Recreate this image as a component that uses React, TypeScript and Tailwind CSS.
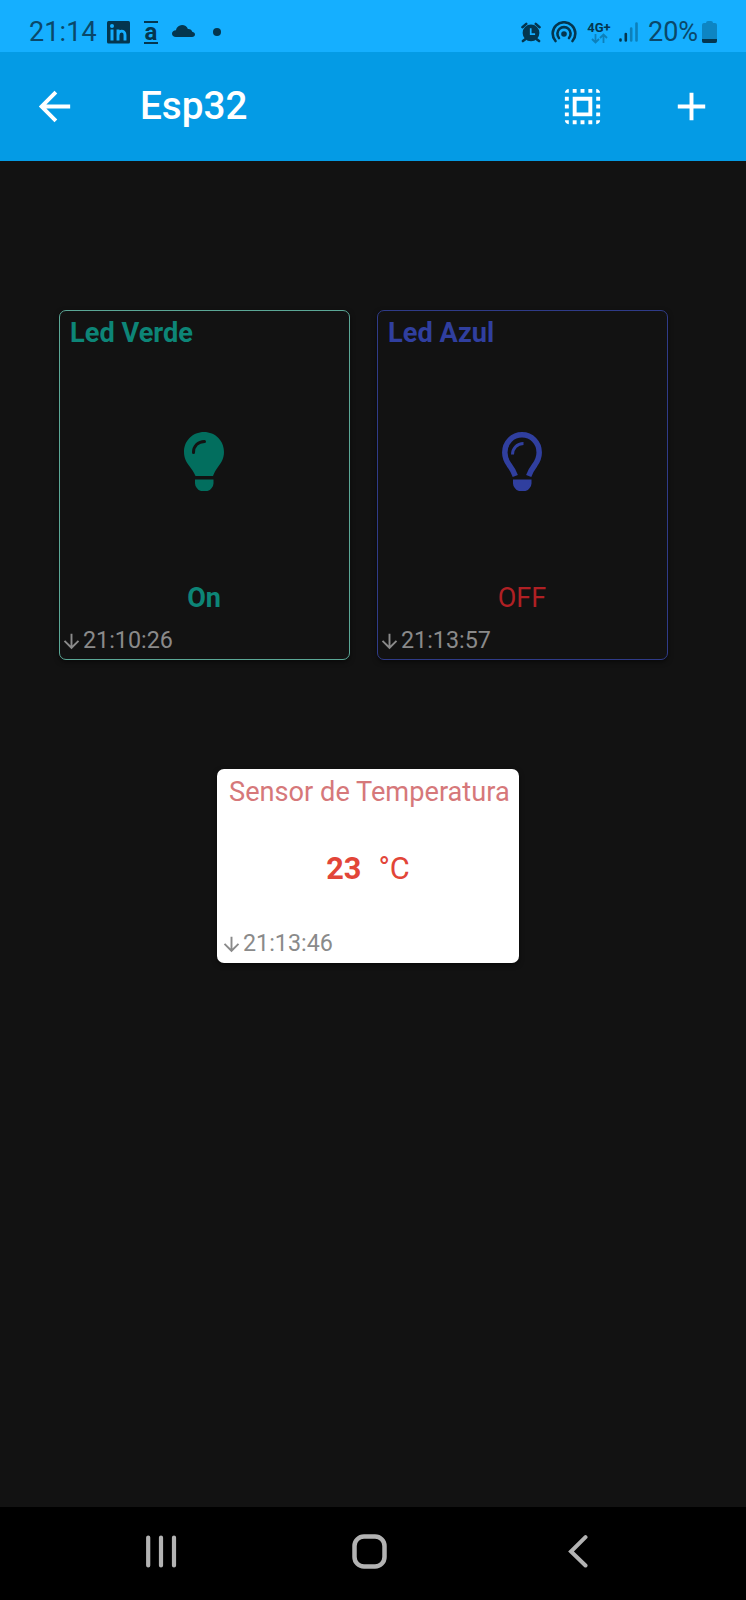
import type { ReactNode } from "react";
import { MdAdd, MdArrowBack, MdArrowDownward, MdSelectAll } from "react-icons/md";

function StatusBar() {
  return (
    <div className="flex h-[52px] items-start bg-[#15afff] pt-[20px] text-[#04364f]">
      <span className="ml-[29px] w-[78px] whitespace-nowrap text-[27px] leading-[24px] tracking-[0.1px] text-[#0a486a]">21:14</span>
      <svg className="mt-px h-[23px] w-[23px]" viewBox="0 0 23 23">
        <rect width="23" height="22.5" rx="1.5" fill="currentColor" />
        <rect x="3.5" y="8.5" width="3" height="11" fill="#15afff" />
        <circle cx="5" cy="5" r="2" fill="#15afff" />
        <path d="M11 19.5V8.5M11 14.5c0-5.500 7-6 7-.5v5.5" fill="none" stroke="#15afff" strokeWidth="2.900" />
      </svg>
      <div className="ml-[14px] mt-px flex h-[23px] w-[14px] justify-center border-y-2 border-current text-[24px] font-bold leading-[18px]">
        a
      </div>
      <svg className="ml-[14px] mt-[5px] h-[12px] w-[23px]" viewBox="0 0 23 12">
        <path
          d="M4 12C1.500 12 0 10.500 0 8.700 0 6.700 1.800 5.300 3.900 5.200 4.600 2.100 7 0 10 0c2.800 0 5 1.600 5.900 4 2.300-.2 4 1 4.300 2.800C22 7.200 23 8.200 23 9.500c0 1.500-1.300 2.500-3 2.500Z"
          fill="currentColor"
        />
      </svg>
      <div className="ml-[18px] mt-[8px] size-[8px] rounded-full bg-current" />
      <svg className="ml-auto mt-[2px] h-[21px] w-[20px]" viewBox="0 0 21 21">
        <circle cx="10.500" cy="11" r="8.800" fill="currentColor" />
        <path d="M1.500 5 5.500 1.500M19.500 5l-4-3.500M4.500 17.500 2 19.500M16.500 17.500l2.500 2" stroke="currentColor" strokeWidth="2.600" strokeLinecap="round" />
        <path d="M10.200 6v6.200h4.600" fill="none" stroke="#15afff" strokeWidth="1.800" />
      </svg>
      <svg className="ml-[10px] mt-px h-[22px] w-[26px]" viewBox="0 0 26 22">
        <g fill="none" stroke="currentColor" strokeWidth="2.600" strokeLinecap="round">
          <path d="M4.500 20A11.300 11.300 0 1 1 21.500 20" />
          <path d="M8 17A6.600 6.600 0 1 1 18 17" />
        </g>
        <circle cx="13" cy="13" r="2.800" fill="currentColor" />
      </svg>
      <div className="ml-[9px] mt-[2px] flex w-[26px] flex-col items-center">
        <span className="text-[13px] font-bold leading-[11px]">4G+</span>
        <svg className="h-[11px] w-[17px]" viewBox="0 0 17 11">
          <path d="M4.500 1v8.500M1 6l3.500 3.500L8 6M12.500 10V1.500M9 5l3.500-3.500L16 5" fill="none" stroke="#0d80bb" strokeWidth="1.800" />
        </svg>
      </div>
      <svg className="ml-[7px] mt-[2px] h-[21px] w-[20px]" viewBox="0 0 20 21">
        <g strokeWidth="2.600" strokeLinecap="round">
          <path d="M1.500 17.500v1M6.800 12v6.500" stroke="currentColor" />
          <path d="M12.200 6.500v12M17.500 1.500v17" stroke="#0d80bb" />
        </g>
      </svg>
      <span className="ml-[9px] w-[54px] whitespace-nowrap text-[27px] leading-[24px] text-[#0a486a]">20%</span>
      <svg className="mr-[29px] mt-px h-[22px] w-[15px]" viewBox="0 0 15 22">
        <path d="M4 2q0-2 2-2h3q2 0 2 2h2q2 0 2 2v16q0 2-2 2H2q-2 0-2-2V4q0-2 2-2Z" fill="#0d85c3" />
        <path d="M0 18h15v2q0 2-2 2H2q-2 0-2-2Z" fill="currentColor" />
      </svg>
    </div>
  );
}

function AppBar() {
  return (
    <header className="flex h-[109px] items-center bg-[#049be5] pb-[2px] pl-[31px] pr-[31px] pt-px text-white">
      <MdArrowBack className="size-[47px]" />
      <h1 className="ml-[62px] text-[38.700px] font-medium leading-[48px]">Esp32</h1>
      <MdSelectAll className="ml-auto size-[47px]" />
      <MdAdd className="ml-[62px] size-[47px]" />
    </header>
  );
}

function UpdatedAt({ time }: { time: string }) {
  return (
    <div className="flex items-center text-[23.300px] leading-[26px] text-[#8a8a8a]">
      <MdArrowDownward className="mt-[3px] size-[23px]" />
      <span>{time}</span>
    </div>
  );
}

const BULB_BASE = "M11 47.500h18.500v4q0 2-1.800 4.500-2 3-4.200 3h-6.500q-2.200 0-4.200-3-1.800-2.500-1.800-4.500Z";

function BulbOn() {
  return (
    <svg className="h-[59px] w-[40px]" viewBox="0 0 40 59">
      <path
        d="M20 0c11.200 0 20 8.700 20 20 0 6-2.500 10.500-5.500 14.200C32 37.500 30.300 40.500 29 44H11.500C10 40.500 8 37.500 5.500 34.200 2.500 30.500 0 26 0 20 0 8.700 8.800 0 20 0Z"
        fill="#026e5e"
      />
      <path d={BULB_BASE} fill="#026e5e" />
      <path d="M9.500 20.500C9.500 14 14 9.500 20.500 9.500" fill="none" stroke="#121212" strokeWidth="3" strokeLinecap="round" />
    </svg>
  );
}

function BulbOff() {
  return (
    <svg className="h-[59px] w-[40px]" viewBox="0 0 40 59">
      <path
        d="M13.300 44C11.500 39 9.500 36 7.200 33 4.700 29.500 2.800 26 2.800 20.500 2.800 10.300 10.500 2.800 20 2.800s17.200 7.500 17.200 17.700c0 5.500-1.900 9-4.400 12.500-2.300 3-4.300 6-6.100 11"
        fill="none"
        stroke="#303f9f"
        strokeWidth="5.500"
      />
      <path d={BULB_BASE} fill="#303f9f" />
      <path d="M10.500 22.500c0-6 4.500-11 11-11" fill="none" stroke="#303f9f" strokeWidth="3" />
    </svg>
  );
}

type LedCardProps = { title: string; tone: string; icon: ReactNode; state: ReactNode; time: string };

function LedCard({ title, tone, icon, state, time }: LedCardProps) {
  return (
    <section className={`flex h-[350px] w-[291px] flex-col rounded-[7px] border shadow-[0_2px_5px_rgba(0,0,0,0.5)] ${tone}`}>
      <h2 className="ml-[10px] mt-[8px] text-[27.200px] font-bold leading-[28px]">{title}</h2>
      <div className="mr-px mt-[85px] flex justify-center">{icon}</div>
      <div className="mr-px mt-[93px] flex justify-center text-[27px] leading-[28px]">{state}</div>
      <div className="mt-[15px]">
        <UpdatedAt time={time} />
      </div>
    </section>
  );
}

function NavBar() {
  return (
    <nav className="flex h-[93px] bg-black pt-[27px]">
      <svg className="ml-[146px] mt-[1px] h-[33px] w-[31px]" viewBox="0 0 31 33">
        <path d="M2.200 2.500v28M15 2.500v28M28 2.500v28" stroke="#b3b3b3" strokeWidth="4.200" strokeLinecap="round" />
      </svg>
      <svg className="ml-[175px] h-[35px] w-[35px]" viewBox="0 0 35 35">
        <rect x="2.500" y="2.500" width="30" height="30" rx="9.500" fill="none" stroke="#b3b3b3" strokeWidth="4.500" />
      </svg>
      <svg className="ml-[181px] mt-[1px] h-[33px] w-[21px]" viewBox="0 0 21 33">
        <path d="M17.500 2.200 3 16.500l14.500 14" fill="none" stroke="#b3b3b3" strokeWidth="4" strokeLinecap="round" />
      </svg>
    </nav>
  );
}

export default function App() {
  return (
    <div className="flex h-[1600px] w-[746px] flex-col bg-[#121212] font-[Roboto,sans-serif]">
      <StatusBar />
      <AppBar />
      <main className="flex-1 pt-[149px]">
        <div className="ml-[59px] flex gap-[27px]">
          <LedCard
            title="Led Verde"
            tone="border-[#5ba796] text-[#0d8577]"
            icon={<BulbOn />}
            state={<span className="font-bold">On</span>}
            time="21:10:26"
          />
          <LedCard
            title="Led Azul"
            tone="border-[#2f3b88] text-[#303f9f]"
            icon={<BulbOff />}
            state={<span className="text-[#b02024]">OFF</span>}
            time="21:13:57"
          />
        </div>
        <section className="ml-[217px] mt-[109px] flex h-[194px] w-[302px] flex-col rounded-[7px] bg-white shadow-[0_2px_5px_rgba(0,0,0,0.5)]">
          <h2 className="ml-[12px] mt-[9px] whitespace-nowrap text-[27.200px] leading-[28px] text-[#d6787a]">
            Sensor de Temperatura
          </h2>
          <div className="mt-[46px] flex justify-center gap-[17px] text-[30.700px] leading-[34px] text-[#e24538]">
            <span className="font-bold">23</span>
            <span>°C</span>
          </div>
          <div className="ml-[3px] mt-[44px]">
            <UpdatedAt time="21:13:46" />
          </div>
        </section>
      </main>
      <NavBar />
    </div>
  );
}
